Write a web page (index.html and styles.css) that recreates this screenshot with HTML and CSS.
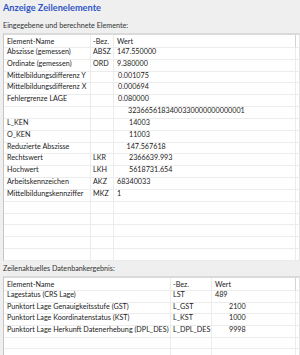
FILE: index.html
```html
<!DOCTYPE html>
<html lang="de">
<head>
<meta charset="utf-8">
<title>Anzeige Zeilenelemente</title>
<link rel="stylesheet" href="styles.css">
</head>
<body>
<div class="page">
  <h1 class="title">Anzeige Zeilenelemente</h1>
  <div class="label">Eingegebene und berechnete Elemente:</div>
  <div class="panel p1">
    <div class="row head"><div class="cell">Element-Name</div><div class="cell c2">-Bez.</div><div class="cell c3">Wert</div><div class="cell fill"></div></div>
    <div class="row"><div class="cell">Abszisse (gemessen)</div><div class="cell c2">ABSZ</div><div class="cell c3">147.550000</div><div class="cell fill"></div></div>
    <div class="row"><div class="cell">Ordinate (gemessen)</div><div class="cell c2">ORD</div><div class="cell c3">9.380000</div><div class="cell fill"></div></div>
    <div class="row"><div class="cell">Mittelbildungsdifferenz Y</div><div class="cell c2"></div><div class="cell c3 i1">0.001075</div><div class="cell fill"></div></div>
    <div class="row"><div class="cell">Mittelbildungsdifferenz X</div><div class="cell c2"></div><div class="cell c3 i1">0.000694</div><div class="cell fill"></div></div>
    <div class="row"><div class="cell">Fehlergrenze LAGE</div><div class="cell c2"></div><div class="cell c3 i1">0.080000</div><div class="cell fill"></div></div>
    <div class="row"><div class="cell"></div><div class="cell c2"></div><div class="cell c3 i3">3236656183400330000000000001</div><div class="cell fill"></div></div>
    <div class="row"><div class="cell">L_KEN</div><div class="cell c2"></div><div class="cell c3 i4">14003</div><div class="cell fill"></div></div>
    <div class="row"><div class="cell">O_KEN</div><div class="cell c2"></div><div class="cell c3 i4">11003</div><div class="cell fill"></div></div>
    <div class="row"><div class="cell">Reduzierte Abszisse</div><div class="cell c2"></div><div class="cell c3 i2">147.567618</div><div class="cell fill"></div></div>
    <div class="row"><div class="cell">Rechtswert</div><div class="cell c2">LKR</div><div class="cell c3 i4">2366639.993</div><div class="cell fill"></div></div>
    <div class="row"><div class="cell">Hochwert</div><div class="cell c2">LKH</div><div class="cell c3 i4">5618731.654</div><div class="cell fill"></div></div>
    <div class="row"><div class="cell">Arbeitskennzeichen</div><div class="cell c2">AKZ</div><div class="cell c3">68340033</div><div class="cell fill"></div></div>
    <div class="row"><div class="cell">Mittelbildungskennziffer</div><div class="cell c2">MKZ</div><div class="cell c3">1</div><div class="cell fill"></div></div>
    <div class="row"><div class="cell"></div><div class="cell c2"></div><div class="cell c3"></div><div class="cell fill"></div></div>
    <div class="row"><div class="cell"></div><div class="cell c2"></div><div class="cell c3"></div><div class="cell fill"></div></div>
    <div class="row"><div class="cell"></div><div class="cell c2"></div><div class="cell c3"></div><div class="cell fill"></div></div>
    <div class="row"><div class="cell"></div><div class="cell c2"></div><div class="cell c3"></div><div class="cell fill"></div></div>
    <div class="row"><div class="cell"></div><div class="cell c2"></div><div class="cell c3"></div><div class="cell fill"></div></div>
  </div>
  <div class="label">Zeilenaktuelles Datenbankergebnis:</div>
  <div class="panel p2">
    <div class="row head"><div class="cell">Element-Name</div><div class="cell c2">-Bez.</div><div class="cell c3">Wert</div><div class="cell fill"></div></div>
    <div class="row"><div class="cell">Lagestatus (CRS Lage)</div><div class="cell c2">LST</div><div class="cell c3">489</div><div class="cell fill"></div></div>
    <div class="row"><div class="cell">Punktort Lage Genauigkeitsstufe (GST)</div><div class="cell c2">L_GST</div><div class="cell c3 i5">2100</div><div class="cell fill"></div></div>
    <div class="row"><div class="cell">Punktort Lage Koordinatenstatus (KST)</div><div class="cell c2">L_KST</div><div class="cell c3 i5">1000</div><div class="cell fill"></div></div>
    <div class="row"><div class="cell">Punktort Lage Herkunft Datenerhebung (DPL_DES)</div><div class="cell c2">L_DPL_DES</div><div class="cell c3 i5">9998</div><div class="cell fill"></div></div>
    <div class="row"><div class="cell"></div><div class="cell c2"></div><div class="cell c3"></div><div class="cell fill"></div></div>
    <div class="row"><div class="cell"></div><div class="cell c2"></div><div class="cell c3"></div><div class="cell fill"></div></div>
  </div>
</div>
</body>
</html>
```
FILE: styles.css
```css
html, body {
  margin: 0;
  padding: 0;
  background: #efefef;
}
body {
  font-family: Lato, "Liberation Sans", sans-serif;
  color: #222;
  width: 300px;
  height: 355px;
  overflow: hidden;
}
.page {
  display: flex;
  flex-direction: column;
}
.title {
  margin: 0;
  padding: 1px 3px 3px;
  height: 14px;
  line-height: 14px;
  font-size: 9.2px;
  font-weight: bold;
  color: #2f55c9;
}
.label {
  height: 15px;
  line-height: 15px;
  padding-left: 3px;
  font-size: 7.2px;
  color: #333;
  box-sizing: border-box;
}
.panel {
  margin-left: 3px;
  width: 297px;
  box-sizing: border-box;
  background: #fff;
  border-left: 1px solid #c6c6c6;
  border-top: 2px solid #dadada;
  border-right: 1px solid #e4e4e4;
  font-size: 7.2px;
}
.p1 { --cols: 87px 23px 182px 1fr; }
.p2 { --cols: 167px 41px 84px 1fr; }
.row {
  display: grid;
  grid-template-columns: var(--cols);
  height: 11.83px;
}
.row.head {
  height: 13px;
}
.cell {
  box-sizing: border-box;
  border-right: 1px solid #ececec;
  border-bottom: 1px solid #ececec;
  padding-left: 3px;
  line-height: 7.5px;
  white-space: nowrap;
  overflow: hidden;
}
.head .cell {
  padding-top: 3px;
}
.head .c3 {
  border-right-color: #d4d4d4;
}
.c2 { padding-left: 2px; }
.c3 { padding-left: 3px; }
.fill { border-right: none; padding: 0; }
.i1 { padding-left: 4px; }
.i2 { padding-left: 12.5px; }
.i3 { padding-left: 14px; }
.i4 { padding-left: 15px; }
.i5 { padding-left: 17px; }
.p2 .row:not(.head) { height: 11.7px; }
```
